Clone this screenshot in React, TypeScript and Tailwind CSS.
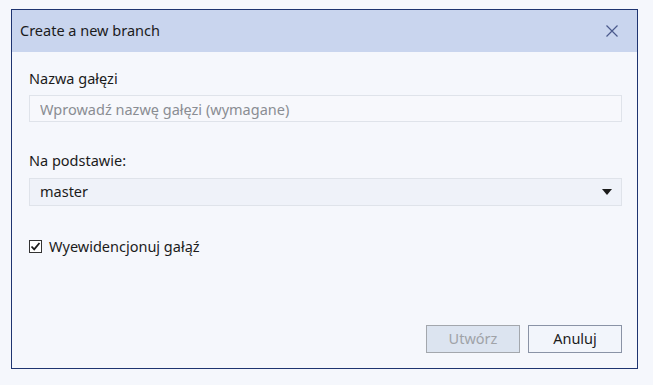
import React, { useState } from 'react';

const font = { fontFamily: '"Noto Sans", "Open Sans", sans-serif' };

const CloseIcon: React.FC = () => (
  <svg width="12" height="12" viewBox="0 0 12 12" fill="none" stroke="#4b5a8c" strokeWidth={1.2}>
    <path d="M0.5 0.5 L11.5 11.5 M11.5 0.5 L0.5 11.5" />
  </svg>
);

const App: React.FC = () => {
  const [checked, setChecked] = useState(true);

  return (
    <div className="w-[653px] h-[385px] bg-[#f5f7fc] pt-[9px] pl-[11px]" style={font}>
      <div className="w-[627px] h-[360px] border border-[#1e3470] bg-[#f5f7fc] flex flex-col text-[#1b1b1b]">
        {/* header */}
        <div className="h-[42px] bg-[#c9d5ee] flex items-center justify-between pl-[8px] pr-[19px]">
          <span className="text-[14.5px]">Create a new branch</span>
          <button className="flex items-center justify-center" aria-label="Close">
            <CloseIcon />
          </button>
        </div>

        {/* body */}
        <div className="flex-1 flex flex-col pl-[17px] pr-[15px]">
          <label className="text-[14.5px] mt-[16px] leading-[20px]">Nazwa gałęzi</label>
          <input
            className="mt-[7px] h-[27px] border border-[#dfe3ea] bg-[#f7f8fc] px-[10px] text-[14.5px] outline-none placeholder:text-[#8a8d93]"
            placeholder="Wprowadź nazwę gałęzi (wymagane)"
          />

          <label className="text-[14.5px] mt-[28px] leading-[20px]">Na podstawie:</label>
          <div className="mt-[8px] h-[28px] border border-[#dfe3ea] bg-[#eff2f9] pl-[10px] pr-[9px] flex items-center justify-between">
            <span className="text-[14.5px]">master</span>
            <svg width="10" height="6" viewBox="0 0 10 6">
              <path d="M0 0 H10 L5 6 Z" fill="#1b1b1b" />
            </svg>
          </div>

          <label className="mt-[30px] flex items-center gap-[7px] text-[14.5px] cursor-pointer">
            <span
              className="w-[13px] h-[13px] border border-[#333] bg-white flex items-center justify-center"
              onClick={() => setChecked(!checked)}
            >
              {checked && (
                <svg width="11" height="11" viewBox="0 0 11 11" fill="none" stroke="#1b1b1b" strokeWidth={1.8}>
                  <path d="M1.5 5.5 L4.2 8.3 L9.5 2" />
                </svg>
              )}
            </span>
            <span>Wyewidencjonuj gałąź</span>
          </label>

          <div className="mt-auto mb-[15px] flex justify-end gap-[8px]">
            <button
              disabled
              className="w-[94px] h-[28px] border border-[#a3a7ad] bg-[#dce4f0] text-[14.5px] text-[#a0a3a8]"
            >
              Utwórz
            </button>
            <button className="w-[94px] h-[28px] border border-[#8a93a6] bg-[#f2f5fb] text-[14.5px] text-[#1b1b1b]">
              Anuluj
            </button>
          </div>
        </div>
      </div>
    </div>
  );
};

export default App;
